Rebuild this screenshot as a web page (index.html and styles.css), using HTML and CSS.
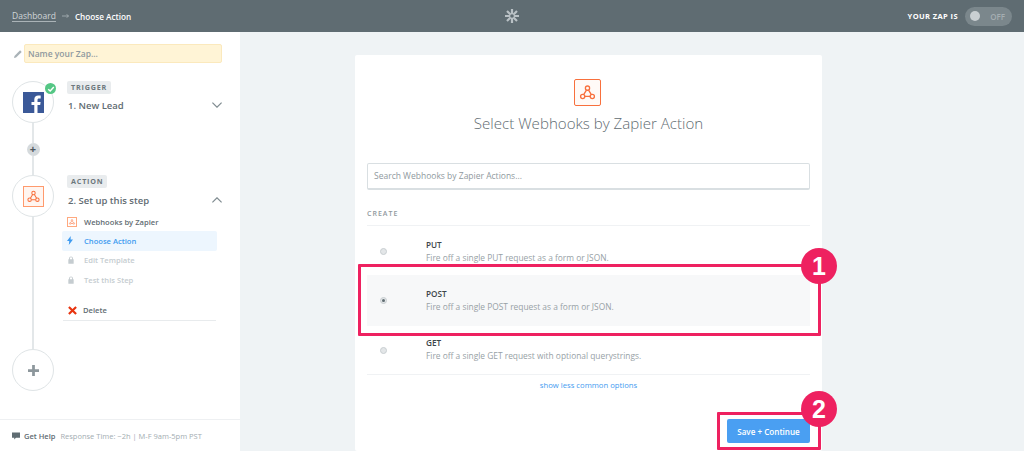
FILE: index.html
```html
<!DOCTYPE html>
<html lang="en">
<head>
  <meta charset="UTF-8" />
  <title>Choose Action</title>
  <link rel="stylesheet" href="styles.css">
</head>
<body>
  <svg class="defs" width="0" height="0">
    <symbol id="hook" viewBox="0 0 24 24">
      <g fill="none" stroke="currentColor" stroke-width="1.5">
        <circle cx="12" cy="7" r="2.4" />
        <circle cx="6.5" cy="16.5" r="2.4" />
        <circle cx="17.5" cy="16.5" r="2.4" />
        <path d="M10.8 9.2 7.6 14.4M9 16.5h6M13.2 9.2l3.2 5.2" />
      </g>
    </symbol>
    <symbol id="lock" viewBox="0 0 12 12">
      <path fill="currentColor" d="M2 5h1V3.6a3 3 0 0 1 6 0V5h1v6.5H2zM4.4 5h3.2V3.6a1.6 1.6 0 0 0-3.2 0z" />
    </symbol>
  </svg>

  <header class="topbar">
    <div class="crumbs">
      <a class="crumb-link">Dashboard</a>
      <svg class="crumb-arrow" viewBox="0 0 8 6" width="7" height="6">
        <path fill="none" stroke="#b8c0c4" stroke-width="0.8" d="M0 3h7.4M5.400 1l2 2-2 2" />
      </svg>
      <span class="crumb-current">Choose Action</span>
    </div>
    <svg class="logo" viewBox="0 0 14 14" width="14" height="14">
      <g stroke="#b9c1c5" stroke-width="2.2">
        <path d="M7 0v14M0 7h14M2 2l10 10M12 2 2 12" />
      </g>
      <circle cx="7" cy="7" r="1.8" fill="#5f6c72" />
    </svg>
    <div class="zap-status">
      <span class="zap-label">YOUR ZAP IS</span>
      <div class="toggle">
        <span class="toggle-knob"></span>
        <span class="toggle-text">OFF</span>
      </div>
    </div>
  </header>

  <div class="layout">
    <aside class="sidebar">
      <div class="name-row">
        <svg class="pencil" viewBox="0 0 10 10" width="8" height="8">
          <path fill="#a9b2b7" d="M0 10l.6-2.6L7.6.4l2 2-7 7z" />
        </svg>
        <div class="name-input">Name your Zap...</div>
      </div>

      <div class="steps">
        <div class="step step-trigger">
          <div class="rail">
            <div class="circle">
              <svg viewBox="0 0 21 21" width="21" height="21">
                <rect width="21" height="21" fill="#3b5998" />
                <path fill="#fff" d="M14.5 21v-8h2.7l.4-3.1h-3.1V7.900c0-.9.3-1.500 1.600-1.500h1.600V3.600c-.3 0-1.300-.1-2.400-.1-2.400 0-4 1.400-4 4.100v2.300H8.500V13h2.800v8z" />
              </svg>
              <span class="check">
                <svg viewBox="0 0 10 10" width="8" height="8">
                  <path fill="none" stroke="#fff" stroke-width="1.8" d="M1.500 5.200 4 7.500l4.500-5" />
                </svg>
              </span>
            </div>
            <div class="line"></div>
            <div class="mini-plus">+</div>
            <div class="line"></div>
          </div>
          <div class="step-body">
            <span class="tag">TRIGGER</span>
            <div class="step-title">
              <span>1. New Lead</span>
              <svg class="chevron" viewBox="0 0 10 6" width="10" height="6">
                <path fill="none" stroke="#7f8b90" stroke-width="1.2" d="M.4.6 5 5.200 9.600.6" />
              </svg>
            </div>
          </div>
        </div>

        <div class="step step-action">
          <div class="rail">
            <div class="circle">
              <div class="hook-box">
                <svg width="17" height="17"><use href="#hook" /></svg>
              </div>
            </div>
            <div class="line"></div>
          </div>
          <div class="step-body">
            <span class="tag">ACTION</span>
            <div class="step-title">
              <span>2. Set up this step</span>
              <svg class="chevron" viewBox="0 0 10 6" width="10" height="6">
                <path fill="none" stroke="#7f8b90" stroke-width="1.2" d="M.4 5.400 5 .8l4.600 4.600" />
              </svg>
            </div>
            <ul class="substeps">
              <li class="substep">
                <span class="sub-icon"><span class="hook-mini"><svg width="8" height="8"><use href="#hook" /></svg></span></span>
                Webhooks by Zapier
              </li>
              <li class="substep is-active">
                <span class="sub-icon">
                  <svg viewBox="0 0 8 12" width="6" height="9"><path fill="#3f9bf0" d="M5 0 0 6.800h3L2.400 12 8 4.800H4.800z" /></svg>
                </span>
                Choose Action
              </li>
              <li class="substep is-locked">
                <span class="sub-icon"><svg width="8" height="8"><use href="#lock" /></svg></span>
                Edit Template
              </li>
              <li class="substep is-locked">
                <span class="sub-icon"><svg width="8" height="8"><use href="#lock" /></svg></span>
                Test this Step
              </li>
            </ul>
            <div class="delete-row">
              <svg viewBox="0 0 10 10" width="9" height="9">
                <path stroke="#e8340f" stroke-width="2.4" d="M1 1l8 8M9 1 1 9" />
              </svg>
              Delete
            </div>
          </div>
        </div>

        <div class="step step-add">
          <div class="rail">
            <div class="circle">
              <svg viewBox="0 0 12 12" width="11" height="11">
                <path stroke="#8d979c" stroke-width="3" d="M6 0v12M0 6h12" />
              </svg>
            </div>
          </div>
        </div>
      </div>

      <footer class="help">
        <svg viewBox="0 0 10 10" width="8" height="8">
          <path fill="#5f6c72" d="M0 .5h10v6.800H5L2.800 9.500V7.300H0z" />
        </svg>
        <strong>Get Help</strong>
        <span>Response Time: ~2h | M-F 9am-5pm PST</span>
      </footer>
    </aside>

    <main class="main">
      <section class="card">
        <div class="card-head">
          <div class="hook-large">
            <svg width="21" height="21"><use href="#hook" /></svg>
          </div>
          <h1>Select Webhooks by Zapier Action</h1>
        </div>
        <div class="search">Search Webhooks by Zapier Actions...</div>
        <div class="section-label">CREATE</div>
        <div class="options">
          <div class="option option-put">
            <span class="radio"></span>
            <div>
              <div class="option-name">PUT</div>
              <div class="option-desc">Fire off a single PUT request as a form or JSON.</div>
            </div>
          </div>
          <div class="option option-post">
            <span class="radio is-checked"></span>
            <div>
              <div class="option-name">POST</div>
              <div class="option-desc">Fire off a single POST request as a form or JSON.</div>
            </div>
          </div>
          <div class="option option-get">
            <span class="radio"></span>
            <div>
              <div class="option-name">GET</div>
              <div class="option-desc">Fire off a single GET request with optional querystrings.</div>
            </div>
          </div>
        </div>
        <a class="more-link">show less common options</a>
        <div class="actions">
          <button class="save-btn">Save + Continue</button>
        </div>
      </section>
    </main>
  </div>

  <div class="callout callout-post"></div>
  <div class="callout callout-save"></div>
  <div class="badge badge-one">1</div>
  <div class="badge badge-two">2</div>
</body>
</html>
```

FILE: styles.css
```css
html, body {
  height: 100%;
}

body {
  margin: 0;
  font-family: "Open Sans", sans-serif;
  color: #5f6c72;
  background: #eff3f5;
  overflow: hidden;
  position: relative;
}

.defs {
  position: absolute;
}

.topbar {
  height: 32px;
  background: #5f6c72;
  display: grid;
  grid-template-columns: 1fr auto 1fr;
  align-items: center;
  padding: 0 12px;
  color: #fff;
  font-size: 8.5px;
}

.crumbs {
  display: flex;
  align-items: center;
  gap: 6px;
}

.crumb-link {
  color: #cfd5d8;
  border-bottom: 1px solid #aab3b7;
  line-height: 11px;
}

.crumb-current {
  font-weight: 600;
  font-size: 8.2px;
}

.logo {
  display: block;
}

.zap-status {
  display: flex;
  justify-content: flex-end;
  align-items: center;
  gap: 7px;
}

.zap-label {
  font-size: 7.5px;
  font-weight: 700;
  letter-spacing: 0.4px;
}

.toggle {
  width: 47px;
  height: 19px;
  border-radius: 10px;
  background: #7b878c;
  display: flex;
  align-items: center;
  justify-content: space-between;
  padding: 0 7px 0 5px;
  box-sizing: border-box;
}

.toggle-knob {
  width: 10px;
  height: 10px;
  border-radius: 50%;
  background: #c9cfd2;
}

.toggle-text {
  font-size: 8px;
  font-weight: 600;
  color: #a5aeb2;
}

.layout {
  display: flex;
  height: 419px;
}

/* sidebar */
.sidebar {
  width: 240px;
  flex: none;
  background: #fff;
  display: flex;
  flex-direction: column;
  box-sizing: border-box;
  padding-top: 12px;
}

.name-row {
  display: flex;
  align-items: center;
  gap: 2px;
  padding-left: 14px;
  width: 208px;
}

.name-input {
  flex: 1;
  height: 19px;
  line-height: 18px;
  box-sizing: border-box;
  background: #fff4d6;
  border: 1px solid #fbe9bd;
  border-radius: 2px;
  padding-left: 3px;
  font-size: 8.5px;
  font-weight: 600;
  color: #8f999e;
}

.steps {
  flex: 1;
  padding: 18px 0 0 12px;
}

.step {
  display: flex;
}

.rail {
  width: 42px;
  flex: none;
  display: flex;
  flex-direction: column;
  align-items: center;
}

.circle {
  width: 42px;
  height: 42px;
  flex: none;
  box-sizing: border-box;
  border: 1px solid #dfe4e6;
  border-radius: 50%;
  background: #fff;
  display: flex;
  align-items: center;
  justify-content: center;
  position: relative;
}

.check {
  position: absolute;
  top: 1px;
  right: -3px;
  width: 11px;
  height: 11px;
  border-radius: 50%;
  background: #55c785;
  display: flex;
  align-items: center;
  justify-content: center;
}

.line {
  width: 2px;
  flex: 1;
  background: #e3e7e9;
}

.mini-plus {
  width: 13px;
  height: 13px;
  flex: none;
  border-radius: 50%;
  background: #d5dadd;
  color: #4d585d;
  font-size: 11px;
  font-weight: 700;
  line-height: 12px;
  text-align: center;
}

.step-trigger {
  height: 94px;
}

.step-action {
  height: 174px;
}

.hook-box {
  width: 21px;
  height: 21px;
  border: 1px solid #ff9a6d;
  background: #fff5f0;
  color: #f8703d;
  display: flex;
  align-items: center;
  justify-content: center;
  box-sizing: border-box;
}

.step-body {
  width: 155px;
  margin-left: 13px;
}

.tag {
  display: block;
  width: fit-content;
  background: #e9ecee;
  border-radius: 2px;
  padding: 0 4px;
  height: 13px;
  line-height: 13px;
  font-size: 7.2px;
  font-weight: 700;
  letter-spacing: 0.8px;
  color: #6d787d;
}

.step-title {
  display: flex;
  justify-content: space-between;
  align-items: center;
  margin-top: 3px;
  height: 18px;
  padding-left: 1px;
  font-size: 9.5px;
  font-weight: 600;
  color: #5f6c72;
}

.step-trigger .step-title {
  margin-top: 2px;
}

.substeps {
  list-style: none;
  margin: 3px 0 0 -5px;
  padding: 0;
  width: 155px;
}

.substep {
  display: flex;
  align-items: center;
  height: 19.3px;
  font-size: 7.6px;
  font-weight: 600;
  color: #5f6c72;
  border-radius: 2px;
}

.sub-icon {
  width: 22px;
  padding-left: 5px;
  box-sizing: border-box;
  display: flex;
  align-items: center;
}

.hook-mini {
  width: 10px;
  height: 10px;
  border: 1px solid #ffa97f;
  box-sizing: border-box;
  color: #f8703d;
  display: flex;
  align-items: center;
  justify-content: center;
}

.is-active {
  background: #edf6fe;
  color: #3f9bf0;
}

.is-locked {
  color: #c5ccd0;
}

.delete-row {
  display: flex;
  align-items: center;
  gap: 6px;
  margin: 14px 0 0 -4px;
  padding: 0 0 3px 5px;
  width: 153px;
  height: 18px;
  box-sizing: border-box;
  border-bottom: 1px solid #e8ebed;
  font-size: 7.6px;
  font-weight: 600;
}

.help {
  height: 31px;
  border-top: 1px solid #eef0f2;
  display: flex;
  align-items: center;
  padding-left: 12px;
  gap: 4px;
  font-size: 7.5px;
  color: #a3adb2;
}

.help strong {
  color: #5f6c72;
  font-weight: 600;
  margin-right: 1px;
}

/* main card */
.main {
  flex: 1;
  padding: 23px 0 0 115px;
}

.card {
  width: 467px;
  height: 396px;
  box-sizing: border-box;
  background: #fff;
  border-radius: 2px;
  padding: 24px 12px 0;
}

.card-head {
  display: flex;
  flex-direction: column;
  align-items: center;
}

.hook-large {
  width: 27px;
  height: 27px;
  margin-right: 2px;
  box-sizing: border-box;
  border: 1px solid #f8703d;
  border-radius: 2px;
  background: #fffaf7;
  color: #f8703d;
  display: flex;
  align-items: center;
  justify-content: center;
}

h1 {
  margin: 6px 0 0;
  font-size: 15.1px;
  line-height: 22px;
  font-weight: 300;
  color: #5f6c72;
}

.search {
  margin: 29px 0 0;
  height: 27px;
  line-height: 24px;
  box-sizing: border-box;
  border: 1px solid #d9dfe2;
  border-width: 1px 1px 2px 1px;
  border-radius: 2px;
  padding-left: 6px;
  font-size: 8.5px;
  color: #8f999e;
}

.section-label {
  margin-top: 17px;
  height: 13px;
  line-height: 13px;
  font-size: 7px;
  font-weight: 600;
  letter-spacing: 1px;
  color: #8f999e;
}

.options {
  margin-top: 5px;
  border-top: 1px solid #f0f2f4;
}

.option {
  display: flex;
  align-items: center;
  box-sizing: border-box;
  padding-left: 13px;
}

.option-put {
  height: 49px;
}

.option-post {
  height: 51px;
  padding-bottom: 2px;
  background: #f7f8f9;
}

.option-get {
  height: 49px;
  border-bottom: 1px solid #f0f2f4;
  padding-bottom: 2px;
}

.radio {
  width: 7px;
  height: 7px;
  margin-top: 2px;
  box-sizing: border-box;
  border-radius: 50%;
  background: #e3e6e8;
  border: 1px solid #c8ced1;
  margin-right: 39px;
  flex: none;
  position: relative;
}

.is-checked::after {
  content: "";
  position: absolute;
  inset: 1px;
  border-radius: 50%;
  background: #5f6c72;
}

.option-name {
  font-size: 8.2px;
  line-height: 13px;
  font-weight: 600;
  color: #3d464a;
}

.option-desc {
  font-size: 8.4px;
  line-height: 13px;
  color: #97a1a6;
}

.more-link {
  display: block;
  margin-top: 4px;
  text-align: center;
  font-size: 7.7px;
  line-height: 13px;
  color: #3f9bf0;
}

.actions {
  display: flex;
  justify-content: flex-end;
  margin-top: 27px;
}

.save-btn {
  width: 83px;
  height: 24px;
  padding: 0;
  border: none;
  border-radius: 2px;
  background: #4a9ff2;
  color: #fff;
  font-family: inherit;
  font-size: 8.1px;
  font-weight: 600;
}

/* annotations drawn over the screenshot */
.callout {
  position: absolute;
  box-sizing: border-box;
  border: 3px solid #ee2160;
  border-radius: 1px;
}

.callout-post {
  left: 358px;
  top: 264px;
  width: 463px;
  height: 72px;
}

.callout-save {
  left: 717px;
  top: 412px;
  width: 104px;
  height: 38px;
}

.badge {
  position: absolute;
  left: 801px;
  width: 36px;
  height: 36px;
  border-radius: 50%;
  background: #ee2160;
  color: #fff;
  font-family: "Liberation Sans", sans-serif;
  font-size: 25px;
  font-weight: 700;
  line-height: 36px;
  text-align: center;
}

.badge-one {
  top: 248px;
}

.badge-two {
  top: 391px;
}
```
